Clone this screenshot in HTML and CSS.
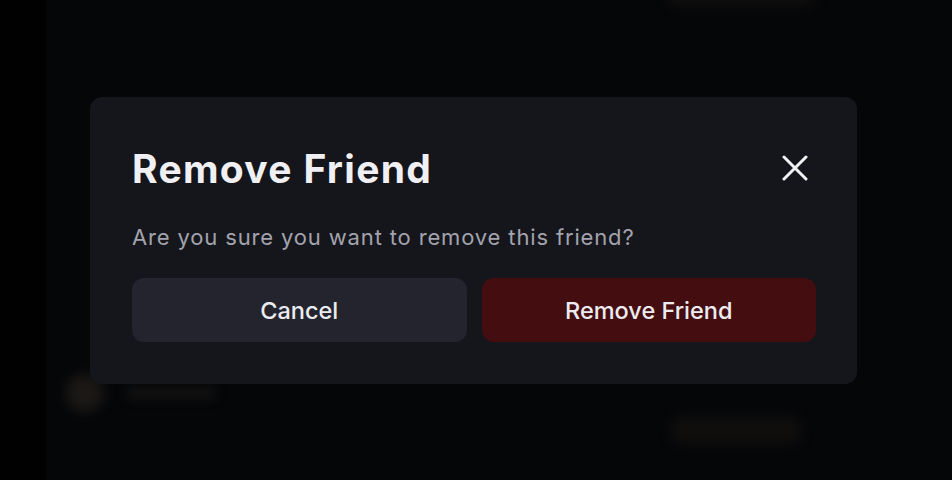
FILE: index.html
```html
<!DOCTYPE html>
<html>
<head>
    <link rel="stylesheet" href="styles.css">
</head>
<body>
    <div class="page">
        <div class="sidebar"></div>
        <div class="content">
            <div class="ghost ghost-top"></div>
            <div class="ghost-row">
                <div class="ghost-avatar"></div>
                <div class="ghost-name"></div>
            </div>
            <div class="ghost ghost-btn"></div>
        </div>
    </div>

    <div class="overlay">
        <div class="modal">
            <div class="modal-header">
                <h2 class="modal-title">Remove Friend</h2>
                <button class="close" aria-label="Close">
                    <svg width="26" height="26" viewBox="0 0 26 26" fill="none" stroke="#f2f2f5" stroke-width="3" stroke-linecap="round">
                        <path d="M2 2L24 24M24 2L2 24"/>
                    </svg>
                </button>
            </div>
            <p class="modal-text">Are you sure you want to remove this friend?</p>
            <div class="actions">
                <button class="btn btn-cancel">Cancel</button>
                <button class="btn btn-danger">Remove Friend</button>
            </div>
        </div>
    </div>
</body>
</html>
```

FILE: styles.css
```css
* {
    margin: 0;
    padding: 0;
    box-sizing: border-box;
    font-family: Inter, "Noto Sans", sans-serif;
}

body {
    background: #050608;
    height: 480px;
    overflow: hidden;
}

.page {
    display: flex;
    height: 100%;
}

.sidebar {
    width: 46px;
    background: #010101;
}

.content {
    flex: 1;
    position: relative;
}

.ghost {
    position: absolute;
    background: #1a1713;
    border-radius: 10px;
    filter: blur(6px);
    opacity: 0.5;
}

.ghost-top {
    left: 620px;
    top: -10px;
    width: 150px;
    height: 16px;
}

.ghost-btn {
    left: 625px;
    top: 416px;
    width: 130px;
    height: 28px;
}

.ghost-row {
    position: absolute;
    left: 20px;
    top: 374px;
    display: flex;
    align-items: center;
    gap: 22px;
}

.ghost-avatar {
    width: 38px;
    height: 38px;
    border-radius: 50%;
    background: #2a2520;
    filter: blur(6px);
    opacity: 0.6;
}

.ghost-name {
    width: 90px;
    height: 14px;
    border-radius: 6px;
    background: #101010;
    filter: blur(5px);
}

.overlay {
    position: absolute;
    inset: 0;
    display: flex;
    align-items: flex-start;
    padding: 97px 0 0 90px;
}

.modal {
    width: 767px;
    height: 287px;
    background: #15161b;
    border-radius: 12px;
    padding: 48px 41px 42px 42px;
    display: flex;
    flex-direction: column;
}

.modal-header {
    display: flex;
    align-items: center;
    justify-content: space-between;
    height: 46px;
}

.modal-title {
    font-size: 39px;
    font-weight: 700;
    color: #f0f0f4;
    letter-spacing: 1.3px;
}

.close {
    background: none;
    border: none;
    cursor: pointer;
    display: flex;
    margin-right: 8px;
}

.modal-text {
    margin-top: 32px;
    font-size: 22px;
    line-height: 28px;
    letter-spacing: 0.85px;
    color: #a3a3ae;
}

.actions {
    display: grid;
    grid-template-columns: 1fr 1fr;
    gap: 15px;
    margin-top: 27px;
}

.btn {
    height: 64px;
    border: none;
    border-radius: 12px;
    font-size: 23.5px;
    font-weight: 500;
    color: #ececf0;
    cursor: pointer;
}

.btn-cancel {
    background: #23242e;
}

.btn-danger {
    background: #440d10;
}
```
